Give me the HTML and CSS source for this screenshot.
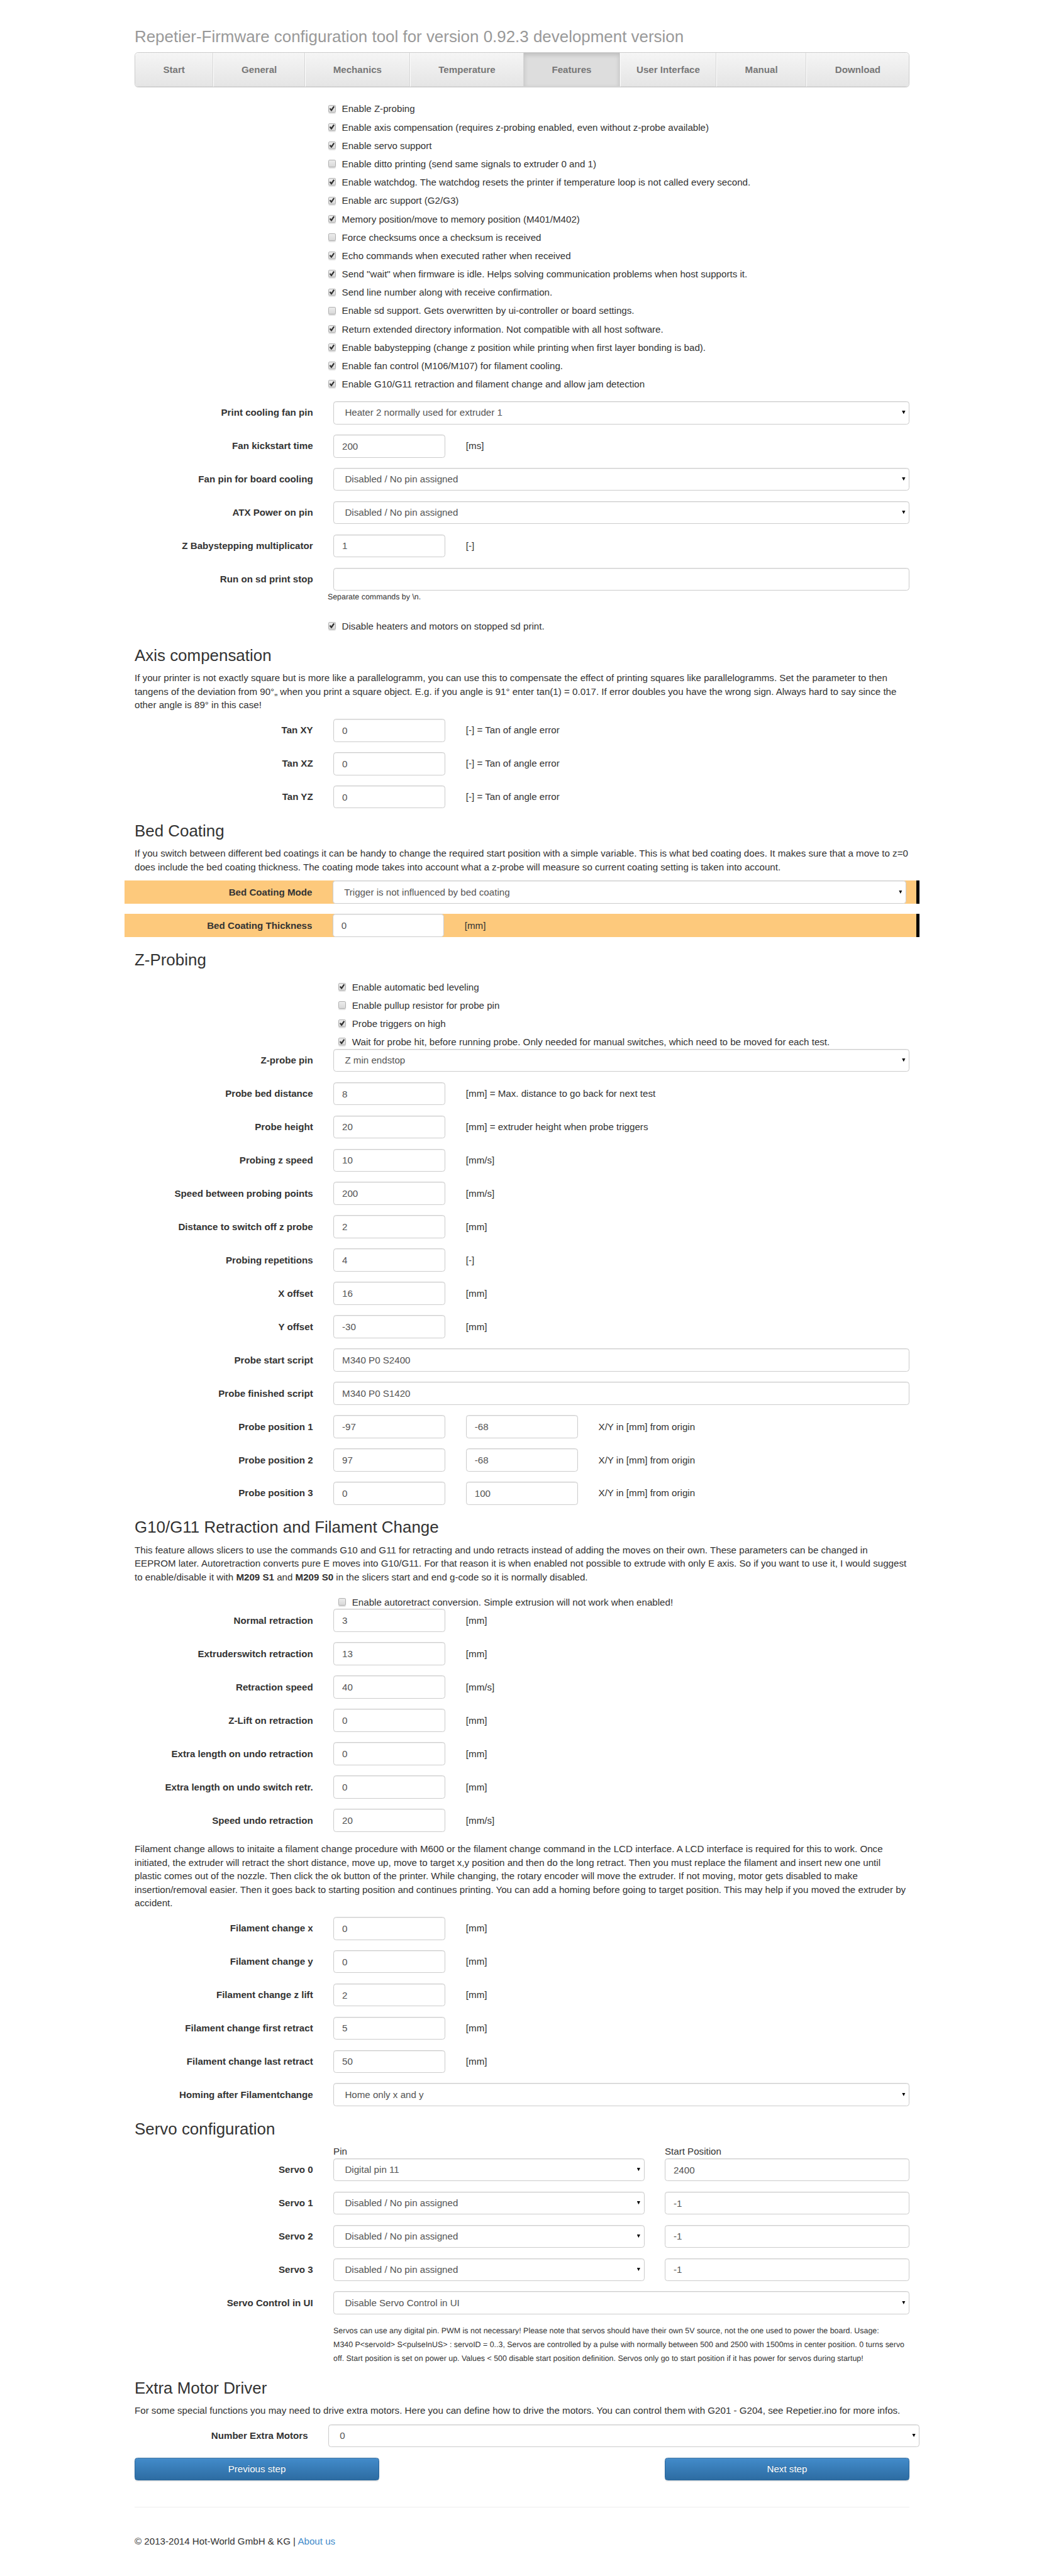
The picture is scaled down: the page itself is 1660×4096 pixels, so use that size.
FILE: index.html
```html
<!DOCTYPE html>
<html lang="en">
<head>
<meta charset="utf-8">
<title>Repetier-Firmware configuration tool</title>
<link rel="stylesheet" href="styles.css">
</head>
<body>
<div class="container">
<h3 class="masthead">Repetier-Firmware configuration tool for version 0.92.3 development version</h3>
<nav class="tabs">
<a>Start</a><a>General</a><a>Mechanics</a><a>Temperature</a><a class="active">Features</a><a>User Interface</a><a>Manual</a><a>Download</a>
</nav>

<div class="checks">
<label class="check"><input type="checkbox" checked>Enable Z-probing</label>
<label class="check"><input type="checkbox" checked>Enable axis compensation (requires z-probing enabled, even without z-probe available)</label>
<label class="check"><input type="checkbox" checked>Enable servo support</label>
<label class="check"><input type="checkbox">Enable ditto printing (send same signals to extruder 0 and 1)</label>
<label class="check"><input type="checkbox" checked>Enable watchdog. The watchdog resets the printer if temperature loop is not called every second.</label>
<label class="check"><input type="checkbox" checked>Enable arc support (G2/G3)</label>
<label class="check"><input type="checkbox" checked>Memory position/move to memory position (M401/M402)</label>
<label class="check"><input type="checkbox">Force checksums once a checksum is received</label>
<label class="check"><input type="checkbox" checked>Echo commands when executed rather when received</label>
<label class="check"><input type="checkbox" checked>Send "wait" when firmware is idle. Helps solving communication problems when host supports it.</label>
<label class="check"><input type="checkbox" checked>Send line number along with receive confirmation.</label>
<label class="check"><input type="checkbox">Enable sd support. Gets overwritten by ui-controller or board settings.</label>
<label class="check"><input type="checkbox" checked>Return extended directory information. Not compatible with all host software.</label>
<label class="check"><input type="checkbox" checked>Enable babystepping (change z position while printing when first layer bonding is bad).</label>
<label class="check"><input type="checkbox" checked>Enable fan control (M106/M107) for filament cooling.</label>
<label class="check"><input type="checkbox" checked>Enable G10/G11 retraction and filament change and allow jam detection</label>
</div>

<div class="row"><label class="name">Print cooling fan pin</label><div class="col-9 select"><select><option>Heater 2 normally used for extruder 1</option></select></div></div>
<div class="row"><label class="name">Fan kickstart time</label><div class="col-2"><input type="text" value="200"></div><div class="unit">[ms]</div></div>
<div class="row"><label class="name">Fan pin for board cooling</label><div class="col-9 select"><select><option>Disabled / No pin assigned</option></select></div></div>
<div class="row"><label class="name">ATX Power on pin</label><div class="col-9 select"><select><option>Disabled / No pin assigned</option></select></div></div>
<div class="row"><label class="name">Z Babystepping multiplicator</label><div class="col-2"><input type="text" value="1"></div><div class="unit">[-]</div></div>
<div class="row with-help"><label class="name">Run on sd print stop</label><div class="col-9"><input type="text" value=""></div></div>
<div class="help">Separate commands by \n.</div>
<div class="checks stop-check"><label class="check"><input type="checkbox" checked>Disable heaters and motors on stopped sd print.</label></div>

<h3>Axis compensation</h3>
<p>If your printer is not exactly square but is more like a parallelogramm, you can use this to compensate the effect of printing squares like parallelogramms. Set the parameter to then tangens of the deviation from 90°„ when you print a square object. E.g. if you angle is 91° enter tan(1) = 0.017. If error doubles you have the wrong sign. Always hard to say since the other angle is 89° in this case!</p>
<div class="row"><label class="name">Tan XY</label><div class="col-2"><input type="text" value="0"></div><div class="unit">[-] = Tan of angle error</div></div>
<div class="row"><label class="name">Tan XZ</label><div class="col-2"><input type="text" value="0"></div><div class="unit">[-] = Tan of angle error</div></div>
<div class="row"><label class="name">Tan YZ</label><div class="col-2"><input type="text" value="0"></div><div class="unit">[-] = Tan of angle error</div></div>

<h3>Bed Coating</h3>
<p>If you switch between different bed coatings it can be handy to change the required start position with a simple variable. This is what bed coating does. It makes sure that a move to z=0 does include the bed coating thickness. The coating mode takes into account what a z-probe will measure so current coating setting is taken into account.</p>
<div class="row eeprom"><label class="name">Bed Coating Mode</label><div class="col-9 select"><select><option>Trigger is not influenced by bed coating</option></select></div></div>
<div class="row eeprom"><label class="name">Bed Coating Thickness</label><div class="col-2"><input type="text" value="0"></div><div class="unit">[mm]</div></div>

<h3>Z-Probing</h3>
<div class="checks inset">
<label class="check"><input type="checkbox" checked>Enable automatic bed leveling</label>
<label class="check"><input type="checkbox">Enable pullup resistor for probe pin</label>
<label class="check"><input type="checkbox" checked>Probe triggers on high</label>
<label class="check"><input type="checkbox" checked>Wait for probe hit, before running probe. Only needed for manual switches, which need to be moved for each test.</label>
</div>
<div class="row"><label class="name">Z-probe pin</label><div class="col-9 select"><select><option>Z min endstop</option></select></div></div>
<div class="row"><label class="name">Probe bed distance</label><div class="col-2"><input type="text" value="8"></div><div class="unit">[mm] = Max. distance to go back for next test</div></div>
<div class="row"><label class="name">Probe height</label><div class="col-2"><input type="text" value="20"></div><div class="unit">[mm] = extruder height when probe triggers</div></div>
<div class="row"><label class="name">Probing z speed</label><div class="col-2"><input type="text" value="10"></div><div class="unit">[mm/s]</div></div>
<div class="row"><label class="name">Speed between probing points</label><div class="col-2"><input type="text" value="200"></div><div class="unit">[mm/s]</div></div>
<div class="row"><label class="name">Distance to switch off z probe</label><div class="col-2"><input type="text" value="2"></div><div class="unit">[mm]</div></div>
<div class="row"><label class="name">Probing repetitions</label><div class="col-2"><input type="text" value="4"></div><div class="unit">[-]</div></div>
<div class="row"><label class="name">X offset</label><div class="col-2"><input type="text" value="16"></div><div class="unit">[mm]</div></div>
<div class="row"><label class="name">Y offset</label><div class="col-2"><input type="text" value="-30"></div><div class="unit">[mm]</div></div>
<div class="row"><label class="name">Probe start script</label><div class="col-9"><input type="text" value="M340 P0 S2400"></div></div>
<div class="row"><label class="name">Probe finished script</label><div class="col-9"><input type="text" value="M340 P0 S1420"></div></div>
<div class="row"><label class="name">Probe position 1</label><div class="col-2"><input type="text" value="-97"></div><div class="col-2"><input type="text" value="-68"></div><div class="unit">X/Y in [mm] from origin</div></div>
<div class="row"><label class="name">Probe position 2</label><div class="col-2"><input type="text" value="97"></div><div class="col-2"><input type="text" value="-68"></div><div class="unit">X/Y in [mm] from origin</div></div>
<div class="row"><label class="name">Probe position 3</label><div class="col-2"><input type="text" value="0"></div><div class="col-2"><input type="text" value="100"></div><div class="unit">X/Y in [mm] from origin</div></div>

<h3>G10/G11 Retraction and Filament Change</h3>
<p>This feature allows slicers to use the commands G10 and G11 for retracting and undo retracts instead of adding the moves on their own. These parameters can be changed in EEPROM later. Autoretraction converts pure E moves into G10/G11. For that reason it is when enabled not possible to extrude with only E axis. So if you want to use it, I would suggest to enable/disable it with <b>M209 S1</b> and <b>M209 S0</b> in the slicers start and end g-code so it is normally disabled.</p>
<div class="checks inset"><label class="check"><input type="checkbox">Enable autoretract conversion. Simple extrusion will not work when enabled!</label></div>
<div class="row"><label class="name">Normal retraction</label><div class="col-2"><input type="text" value="3"></div><div class="unit">[mm]</div></div>
<div class="row"><label class="name">Extruderswitch retraction</label><div class="col-2"><input type="text" value="13"></div><div class="unit">[mm]</div></div>
<div class="row"><label class="name">Retraction speed</label><div class="col-2"><input type="text" value="40"></div><div class="unit">[mm/s]</div></div>
<div class="row"><label class="name">Z-Lift on retraction</label><div class="col-2"><input type="text" value="0"></div><div class="unit">[mm]</div></div>
<div class="row"><label class="name">Extra length on undo retraction</label><div class="col-2"><input type="text" value="0"></div><div class="unit">[mm]</div></div>
<div class="row"><label class="name">Extra length on undo switch retr.</label><div class="col-2"><input type="text" value="0"></div><div class="unit">[mm]</div></div>
<div class="row"><label class="name">Speed undo retraction</label><div class="col-2"><input type="text" value="20"></div><div class="unit">[mm/s]</div></div>
<p>Filament change allows to initaite a filament change procedure with M600 or the filament change command in the LCD interface. A LCD interface is required for this to work. Once initiated, the extruder will retract the short distance, move up, move to target x,y position and then do the long retract. Then you must replace the filament and insert new one until plastic comes out of the nozzle. Then click the ok button of the printer. While changing, the rotary encoder will move the extruder. If not moving, motor gets disabled to make insertion/removal easier. Then it goes back to starting position and continues printing. You can add a homing before going to target position. This may help if you moved the extruder by accident.</p>
<div class="row"><label class="name">Filament change x</label><div class="col-2"><input type="text" value="0"></div><div class="unit">[mm]</div></div>
<div class="row"><label class="name">Filament change y</label><div class="col-2"><input type="text" value="0"></div><div class="unit">[mm]</div></div>
<div class="row"><label class="name">Filament change z lift</label><div class="col-2"><input type="text" value="2"></div><div class="unit">[mm]</div></div>
<div class="row"><label class="name">Filament change first retract</label><div class="col-2"><input type="text" value="5"></div><div class="unit">[mm]</div></div>
<div class="row"><label class="name">Filament change last retract</label><div class="col-2"><input type="text" value="50"></div><div class="unit">[mm]</div></div>
<div class="row"><label class="name">Homing after Filamentchange</label><div class="col-9 select"><select><option>Home only x and y</option></select></div></div>

<h3>Servo configuration</h3>
<div class="row column-heads"><div class="col-5 offset">Pin</div><div class="col-4">Start Position</div></div>
<div class="row"><label class="name">Servo 0</label><div class="col-5 select"><select><option>Digital pin 11</option></select></div><div class="col-4"><input type="text" value="2400"></div></div>
<div class="row"><label class="name">Servo 1</label><div class="col-5 select"><select><option>Disabled / No pin assigned</option></select></div><div class="col-4"><input type="text" value="-1"></div></div>
<div class="row"><label class="name">Servo 2</label><div class="col-5 select"><select><option>Disabled / No pin assigned</option></select></div><div class="col-4"><input type="text" value="-1"></div></div>
<div class="row"><label class="name">Servo 3</label><div class="col-5 select"><select><option>Disabled / No pin assigned</option></select></div><div class="col-4"><input type="text" value="-1"></div></div>
<div class="row"><label class="name">Servo Control in UI</label><div class="col-9 select"><select><option>Disable Servo Control in UI</option></select></div></div>
<div class="row column-heads"><div class="col-9 offset note">Servos can use any digital pin. PWM is not necessary! Please note that servos should have their own 5V source, not the one used to power the board. Usage:<br>M340 P&lt;servoId&gt; S&lt;pulseInUS&gt; : servoID = 0..3, Servos are controlled by a pulse with normally between 500 and 2500 with 1500ms in center position. 0 turns servo<br>off. Start position is set on power up. Values &lt; 500 disable start position definition. Servos only go to start position if it has power for servos during startup!</div></div>

<h3>Extra Motor Driver</h3>
<p>For some special functions you may need to drive extra motors. Here you can define how to drive the motors. You can control them with G201 - G204, see Repetier.ino for more infos.</p>
<div class="row motors"><label class="name">Number Extra Motors</label><div class="motor-count select"><select><option>0</option></select></div></div>
<div class="row steps"><div class="col-4"><button type="button">Previous step</button></div><div class="col-4"><button type="button">Next step</button></div></div>

<footer>© 2013-2014 Hot-World GmbH &amp; KG | <a class="about">About us</a></footer>
</div>
</body>
</html>
```
FILE: styles.css
```css
* { box-sizing: border-box; }

html {
  overflow: hidden;
  background: #fff;
}

body {
  margin: 0;
  zoom: 1.080729;
  font: 14px/20px "Liberation Sans", Arial, sans-serif;
  color: #333;
}

.container {
  width: 1170px;
  margin: 0 auto;
  padding: 20px 15px 0;
}

h3 {
  margin: 20px 0 10px;
  font-size: 24px;
  font-weight: 500;
  line-height: 26.4px;
}

.masthead { margin-top: 20.4px; font-weight: 400; color: #999; }

p { margin: 0 0 10px; }

/* tab bar */
.tabs {
  display: grid;
  grid-template-columns: 144fr 169fr 193fr 210.5fr 176.6fr 178fr 165.3fr 189fr;
  height: 52px;
  border: 1px solid #ccc;
  border-radius: 5px;
  overflow: hidden;
}

.tabs a {
  padding: 15px 0 14px;
  border-left: 1px solid #fff;
  border-right: 1px solid #d5d5d5;
  border-bottom: 1px solid #d5d5d5;
  background: linear-gradient(#f5f5f5, #e5e5e5);
  color: #777;
  font-weight: 700;
  text-align: center;
}

.tabs a:first-child { border-left: 0; }
.tabs a:last-child { border-right: 0; }

.tabs .active {
  background: #ddd;
  border-left: 0;
  box-shadow: inset 0 3px 7px rgba(0, 0, 0, .15);
}

/* checkboxes */
.checks { margin: 0 0 0 285px; }
.tabs + .checks { margin: 14.6px 0 15px 285px; }
.checks.inset { margin-left: 300px; }
.stop-check { margin-top: 15px; }

.check {
  display: flex;
  height: 27px;
  padding-top: 7px;
}

.check input {
  appearance: none;
  flex: none;
  width: 11px;
  height: 11px;
  margin: 4px 9px 0 0;
  border: 1px solid #b0b0b0;
  border-radius: 2px;
  background: linear-gradient(#ececec, #d9d9d9);
  box-shadow: 0 1px 1px rgba(0, 0, 0, .12);
}

.check input:checked::before {
  content: "";
  display: block;
  width: 9px;
  height: 9px;
  background: #333;
  clip-path: polygon(6% 52%, 26% 42%, 40% 58%, 74% 8%, 94% 20%, 46% 92%, 36% 92%);
}

/* form rows */
.row {
  display: flex;
  margin: 0 -15px 15px;
}

.name {
  width: 25%;
  height: 34px;
  padding: 7px 15px 0;
  font-weight: 700;
  text-align: right;
}

.col-2, .col-4, .col-5, .col-9 { padding: 0 15px; }
.col-2 { width: 16.6667%; }
.col-4 { width: 33.3333%; }
.col-5 { width: 41.6667%; }
.col-9 { width: 75%; }
.offset { margin-left: 25%; }
.unit { padding: 7px 15px 0; }

input[type="text"], select {
  display: block;
  width: 100%;
  height: 34px;
  margin: 0;
  padding: 6px 12px;
  border: 1px solid #ccc;
  border-radius: 4px;
  background: #fff;
  box-shadow: inset 0 1px 1px rgba(0, 0, 0, .075);
  color: #555;
  font: inherit;
}

select { appearance: none; padding-left: 16px; opacity: 1; }

.select { position: relative; }

.select::after {
  content: "";
  position: absolute;
  top: 14px;
  right: 21px;
  width: 5px;
  height: 5px;
  background: #000;
  clip-path: polygon(0 0, 100% 0, 50% 100%);
}

.with-help { margin-bottom: 0; }
.help, .note { font-size: 11.5px; text-rendering: geometricPrecision; }
.help { margin-left: 284px; }
.note { white-space: nowrap; }

.eeprom {
  border-right: 5px solid #000;
  background: #fdc97c;
}

.column-heads { margin-bottom: 0; }

.motors .name { width: 285px; }
.motor-count { width: 885px; padding-left: 15px; padding-right: 0; }
.motor-count::after { right: 6px; }

.steps { justify-content: space-between; }

button {
  display: block;
  width: 100%;
  height: 34px;
  padding: 0;
  border: 1px solid #2b669a;
  border-radius: 4px;
  background: linear-gradient(#428bca, #2d6ca2);
  box-shadow: inset 0 1px 0 rgba(255, 255, 255, .15), 0 1px 1px rgba(0, 0, 0, .075);
  color: #fff;
  font: inherit;
  text-shadow: 0 -1px 0 rgba(0, 0, 0, .2);
}

footer {
  height: 99px;
  margin-top: 39px;
  padding-top: 39px;
  border-top: 1px solid #eee;
}

.about { color: #428bca; }
```
